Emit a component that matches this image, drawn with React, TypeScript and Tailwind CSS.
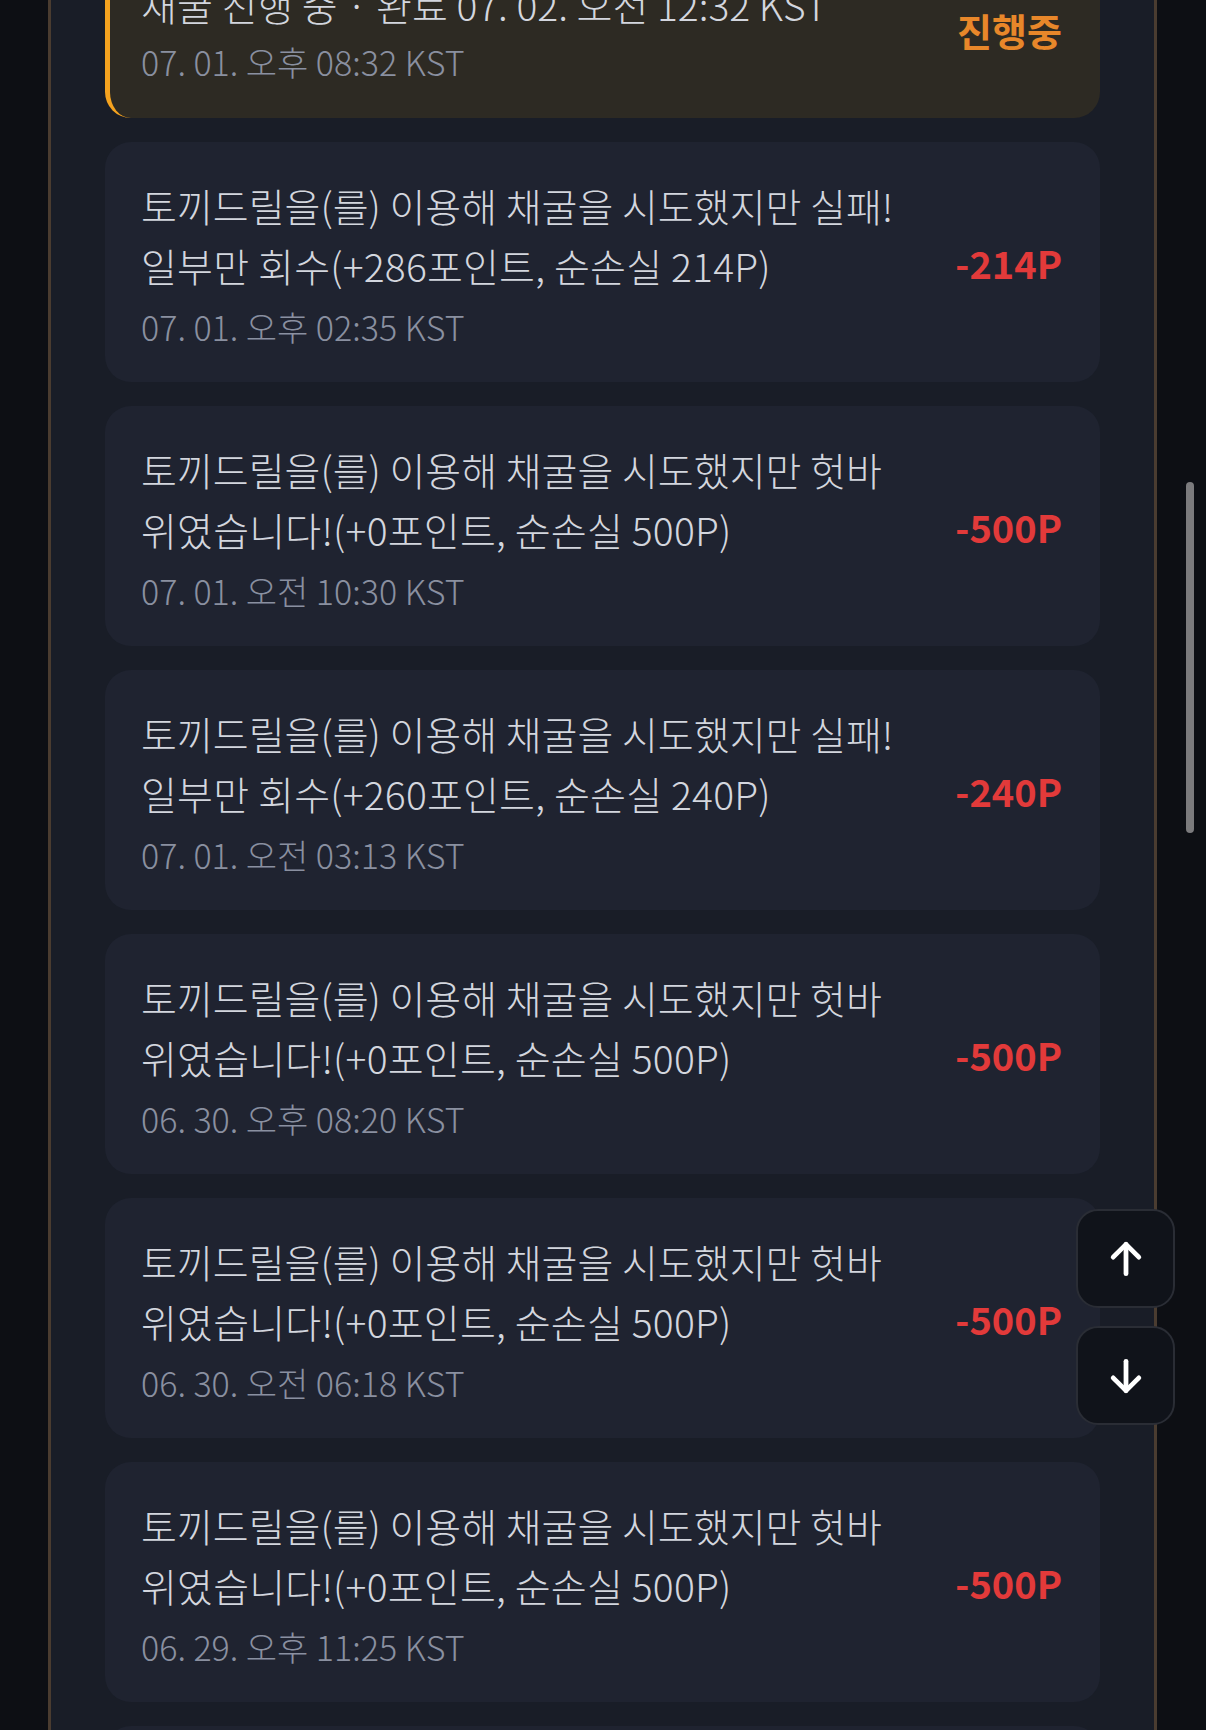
import React from "react";

type Item = { l1: string; l2: string; date: string; amt: string };

const items: Item[] = [
  { l1: "토끼드릴을(를) 이용해 채굴을 시도했지만 실패!", l2: "일부만 회수(+286포인트, 순손실 214P)", date: "07. 01. 오후 02:35 KST", amt: "-214P" },
  { l1: "토끼드릴을(를) 이용해 채굴을 시도했지만 헛바", l2: "위였습니다!(+0포인트, 순손실 500P)", date: "07. 01. 오전 10:30 KST", amt: "-500P" },
  { l1: "토끼드릴을(를) 이용해 채굴을 시도했지만 실패!", l2: "일부만 회수(+260포인트, 순손실 240P)", date: "07. 01. 오전 03:13 KST", amt: "-240P" },
  { l1: "토끼드릴을(를) 이용해 채굴을 시도했지만 헛바", l2: "위였습니다!(+0포인트, 순손실 500P)", date: "06. 30. 오후 08:20 KST", amt: "-500P" },
  { l1: "토끼드릴을(를) 이용해 채굴을 시도했지만 헛바", l2: "위였습니다!(+0포인트, 순손실 500P)", date: "06. 30. 오전 06:18 KST", amt: "-500P" },
  { l1: "토끼드릴을(를) 이용해 채굴을 시도했지만 헛바", l2: "위였습니다!(+0포인트, 순손실 500P)", date: "06. 29. 오후 11:25 KST", amt: "-500P" },
  { l1: "토끼드릴을(를) 이용해 채굴을 시도했지만 헛바", l2: "위였습니다!(+0포인트, 순손실 500P)", date: "06. 29. 오후 05:10 KST", amt: "-500P" },
];

const font = { fontFamily: '"Noto Sans CJK KR", "Noto Sans", sans-serif' };

function Card({ it }: { it: Item }) {
  return (
    <div className="h-[240px] shrink-0 rounded-[26px] bg-[#1f2330] pl-[36px] pr-[38px] flex items-center justify-between">
      <div className="flex flex-col">
        <div className="text-[39px] font-light leading-[60px] text-[#d3d6de] whitespace-nowrap">{it.l1}</div>
        <div className="text-[39px] font-light leading-[60px] text-[#d3d6de] whitespace-nowrap tracking-[0.2px]">{it.l2}</div>
        <div className="mt-[10px] text-[34px] font-light leading-[44px] text-[#8a90a0] whitespace-nowrap">{it.date}</div>
      </div>
      <div className="text-[38px] font-bold text-[#e23a3a] whitespace-nowrap">{it.amt}</div>
    </div>
  );
}

export default function App() {
  return (
    <div style={font} className="w-[1206px] h-[1730px] overflow-hidden bg-[#0d0f14] relative">
      <div className="ml-[48px] w-[1109px] h-[1730px] bg-[#191d27] border-x-[3px] border-[#4a3c30] overflow-hidden">
        <div className="mt-[-60px] px-[54px] flex flex-col gap-[24px]">
          <div className="h-[178px] shrink-0 rounded-[26px] bg-[#2d2a23] border-l-[5px] border-[#f5a31f] pl-[31px] pr-[38px] flex items-center justify-between">
            <div className="flex flex-col">
              <div className="text-[39px] font-light leading-[60px] text-[#d3d6de] whitespace-nowrap">채굴 진행 중 · 완료 07. 02. 오전 12:32 KST</div>
              <div className="mt-[6px] text-[34px] font-light leading-[44px] text-[#8a90a0] whitespace-nowrap">07. 01. 오후 08:32 KST</div>
            </div>
            <div className="text-[38px] font-bold text-[#e8872a] whitespace-nowrap">진행중</div>
          </div>
          {items.map((it, i) => (
            <Card key={i} it={it} />
          ))}
        </div>
      </div>
      <div className="absolute left-[1186px] top-[482px] w-[8px] h-[351px] rounded-full bg-[#7b7b7d]" />
      <div className="absolute left-[1076px] top-[1209px] flex flex-col gap-[18px]">
        <button className="w-[99px] h-[99px] rounded-[22px] bg-[#10131a] border-2 border-[#2a2d35] flex items-center justify-center">
          <svg width="44" height="44" viewBox="0 0 24 24" fill="none" stroke="white" strokeWidth="2.6" strokeLinecap="round" strokeLinejoin="round">
            <path d="M12 20V4" />
            <path d="M5 11l7-7 7 7" />
          </svg>
        </button>
        <button className="w-[99px] h-[99px] rounded-[22px] bg-[#10131a] border-2 border-[#2a2d35] flex items-center justify-center">
          <svg width="44" height="44" viewBox="0 0 24 24" fill="none" stroke="white" strokeWidth="2.6" strokeLinecap="round" strokeLinejoin="round">
            <path d="M12 4v16" />
            <path d="M5 13l7 7 7-7" />
          </svg>
        </button>
      </div>
    </div>
  );
}
